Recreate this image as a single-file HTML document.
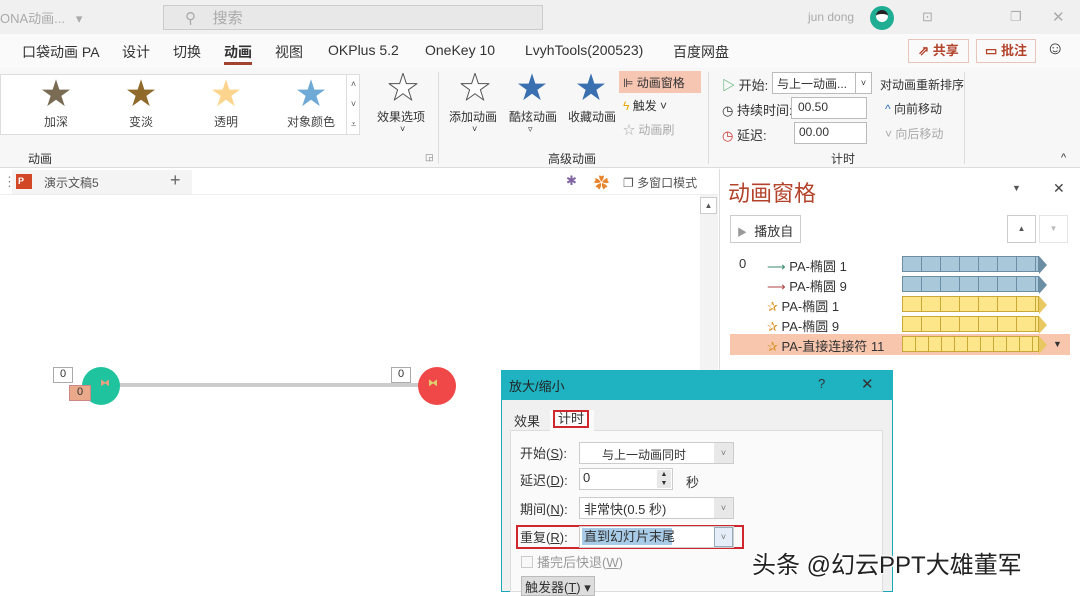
<!DOCTYPE html>
<html><head><meta charset="utf-8"><style>
*{margin:0;padding:0;box-sizing:border-box}
body{width:1080px;height:592px;overflow:hidden;position:relative;background:#fff;font-family:"Liberation Sans","Noto Sans CJK SC",sans-serif;font-size:13px;color:#333}
.a{position:absolute;white-space:nowrap}
.star{position:absolute;font-size:30px;line-height:30px}
.bar{position:absolute;height:16px;border:1px solid #6c8ea4;background:repeating-linear-gradient(90deg,#a9c8d9 0 18px,#6c8ea4 18px 19px)}
.ybar{position:absolute;height:16px;border:1px solid #c9a838;background:repeating-linear-gradient(90deg,#fde68a 0 18px,#c9a838 18px 19px)}
</style></head><body>
<div class="a" style="left:0;top:0;width:1080px;height:34px;background:#f0f0f0"></div>
<div class="a" style="left:0;top:8px;color:#aaa;font-size:13px">ONA动画...&nbsp;&nbsp;&nbsp;▾</div>
<div class="a" style="left:163px;top:5px;width:380px;height:25px;background:#e8e8e8;border:1px solid #ccc"></div>
<div class="a" style="left:185px;top:7px;color:#aaa;font-size:15px">⚲&nbsp;&nbsp;&nbsp;&nbsp;搜索</div>
<div class="a" style="left:808px;top:10px;color:#aaa;font-size:12px">jun dong</div>
<div class="a" style="left:870px;top:6px;width:24px;height:24px;border-radius:50%;background:#1fae93"></div>
<div class="a" style="left:876px;top:10px;width:12px;height:12px;border-radius:50%;background:#fff;border-top:4px solid #222"></div>
<div class="a" style="left:922px;top:9px;color:#aaa;font-size:13px">⊡</div>
<div class="a" style="left:1010px;top:9px;color:#aaa">❐</div>
<div class="a" style="left:1052px;top:8px;color:#aaa;font-size:15px">✕</div>
<div class="a" style="left:0;top:34px;width:1080px;height:34px;background:#fafafa"></div>
<div class="a" style="left:22px;top:42px;font-size:14px;color:#333">口袋动画 PA</div>
<div class="a" style="left:122px;top:42px;font-size:14px">设计</div>
<div class="a" style="left:173px;top:42px;font-size:14px">切换</div>
<div class="a" style="left:224px;top:42px;font-size:14px;font-weight:bold">动画</div>
<div class="a" style="left:224px;top:62px;width:28px;height:3px;background:#a0432f"></div>
<div class="a" style="left:275px;top:42px;font-size:14px">视图</div>
<div class="a" style="left:328px;top:42px;font-size:14px">OKPlus 5.2</div>
<div class="a" style="left:425px;top:42px;font-size:14px">OneKey 10</div>
<div class="a" style="left:525px;top:42px;font-size:14px">LvyhTools(200523)</div>
<div class="a" style="left:673px;top:42px;font-size:14px">百度网盘</div>
<div class="a" style="left:908px;top:39px;width:61px;height:24px;border:1px solid #e8c5bb;color:#b3432b;font-weight:bold;text-align:center;line-height:22px">⇗ 共享</div>
<div class="a" style="left:976px;top:39px;width:60px;height:24px;border:1px solid #e8c5bb;color:#b3432b;font-weight:bold;text-align:center;line-height:22px">▭ 批注</div>
<div class="a" style="left:1046px;top:38px;font-size:18px">☺</div>
<div class="a" style="left:0;top:68px;width:1080px;height:100px;background:#f7f7f7;border-bottom:1px solid #ddd"></div>
<div class="a" style="left:0;top:74px;width:360px;height:61px;background:#fff;border:1px solid #ddd"></div>
<div class="star" style="left:41px;top:80px;color:#7a6b55">★</div>
<div class="star" style="left:126px;top:80px;color:#8f6a2a">★</div>
<div class="star" style="left:211px;top:80px;color:#fbd58e">★</div>
<div class="star" style="left:296px;top:80px;color:#6fa9d6">★</div>
<div class="a" style="left:44px;top:113px;font-size:12px;color:#444">加深</div>
<div class="a" style="left:129px;top:113px;font-size:12px;color:#444">变淡</div>
<div class="a" style="left:214px;top:113px;font-size:12px;color:#444">透明</div>
<div class="a" style="left:287px;top:113px;font-size:12px;color:#444">对象颜色</div>
<div class="a" style="left:346px;top:74px;width:14px;height:61px;border-left:1px solid #ddd;font-size:9px;color:#555;text-align:center;line-height:20px">˄<br>˅<br>⩡</div>
<div class="star" style="left:388px;top:74px;color:#fff;-webkit-text-stroke:1px #555">★</div>
<div class="a" style="left:377px;top:108px;font-size:12px">效果选项</div>
<div class="a" style="left:400px;top:124px;font-size:9px">˅</div>
<div class="a" style="left:28px;top:150px;font-size:12px">动画</div>
<div class="a" style="left:425px;top:152px;font-size:9px;color:#777">◲</div>
<div class="a" style="left:438px;top:72px;width:1px;height:92px;background:#ddd"></div>
<div class="star" style="left:460px;top:74px;color:#fff;-webkit-text-stroke:1px #555">★</div>
<div class="a" style="left:449px;top:108px;font-size:12px">添加动画</div>
<div class="a" style="left:472px;top:124px;font-size:9px">˅</div>
<div class="star" style="left:517px;top:74px;color:#3a6fb0">★</div>
<div class="a" style="left:509px;top:108px;font-size:12px">酷炫动画</div>
<div class="a" style="left:528px;top:124px;font-size:9px">▿</div>
<div class="star" style="left:576px;top:74px;color:#3a6fb0">★</div>
<div class="a" style="left:568px;top:108px;font-size:12px">收藏动画</div>
<div class="a" style="left:619px;top:71px;width:82px;height:22px;background:#f6c6b3"></div>
<div class="a" style="left:623px;top:74px;font-size:12px">⊫ 动画窗格</div>
<div class="a" style="left:623px;top:97px;font-size:12px"><span style="color:#e8a800">ϟ</span> 触发 ˅</div>
<div class="a" style="left:623px;top:121px;font-size:12px;color:#aaa">☆ 动画刷</div>
<div class="a" style="left:548px;top:150px;font-size:12px">高级动画</div>
<div class="a" style="left:708px;top:72px;width:1px;height:92px;background:#ddd"></div>
<div class="a" style="left:722px;top:75px;font-size:13px"><span style="color:#3aa05a">▷</span> 开始:</div>
<div class="a" style="left:772px;top:72px;width:100px;height:22px;background:#fff;border:1px solid #bbb;font-size:12px;padding:2px 4px">与上一动画...<span style="position:absolute;right:0;top:0;width:16px;height:20px;border-left:1px solid #bbb;text-align:center;font-size:9px;line-height:20px">˅</span></div>
<div class="a" style="left:722px;top:100px;font-size:13px">◷ 持续时间:</div>
<div class="a" style="left:791px;top:97px;width:76px;height:22px;background:#fff;border:1px solid #bbb;font-size:12px;padding:2px 6px">00.50</div>
<div class="a" style="left:722px;top:125px;font-size:13px"><span style="color:#c33">◷</span> 延迟:</div>
<div class="a" style="left:794px;top:122px;width:73px;height:22px;background:#fff;border:1px solid #bbb;font-size:12px;padding:2px 4px">00.00</div>
<div class="a" style="left:880px;top:76px;font-size:12px">对动画重新排序</div>
<div class="a" style="left:885px;top:100px;font-size:12px"><span style="color:#2a6db0">^</span> 向前移动</div>
<div class="a" style="left:885px;top:125px;font-size:12px;color:#aaa">˅ 向后移动</div>
<div class="a" style="left:831px;top:150px;font-size:12px">计时</div>
<div class="a" style="left:964px;top:72px;width:1px;height:92px;background:#ddd"></div>
<div class="a" style="left:1061px;top:152px;font-size:11px">^</div>
<div class="a" style="left:0;top:169px;width:718px;height:26px;background:#fff;border-bottom:1px solid #eee"></div>
<div class="a" style="left:12px;top:170px;width:180px;height:24px;background:#f4f4f4"></div>
<div class="a" style="left:3px;top:174px;color:#888">⋮</div>
<div class="a" style="left:16px;top:174px;width:16px;height:15px;background:#d24726;color:#fff;font-size:9px;font-weight:bold;line-height:15px;padding-left:2px">P</div>
<div class="a" style="left:44px;top:174px;font-size:12px;color:#555">演示文稿5</div>
<div class="a" style="left:170px;top:170px;font-size:18px;color:#666">+</div>
<div class="a" style="left:566px;top:173px;color:#8064a2">✱</div>
<div class="a" style="left:594px;top:172px;color:#e8852c;font-size:15px">✿</div>
<div class="a" style="left:623px;top:174px;font-size:12px;color:#555">❐ 多窗口模式</div>
<div class="a" style="left:700px;top:195px;width:18px;height:397px;background:#f3f3f3"></div>
<div class="a" style="left:700px;top:197px;width:17px;height:17px;background:#fff;border:1px solid #ccc;font-size:8px;text-align:center;line-height:15px;color:#555">▲</div>
<div class="a" style="left:100px;top:383px;width:320px;height:4px;background:#ccc"></div>
<div class="a" style="left:82px;top:367px;width:38px;height:38px;border-radius:50%;background:#1fc49e"></div>
<div class="a" style="left:418px;top:367px;width:38px;height:38px;border-radius:50%;background:#f04848"></div>
<div class="a" style="left:100px;top:378px;font-size:10px;color:#e8a080">⧓</div>
<div class="a" style="left:428px;top:378px;font-size:10px;color:#ddd070">⧓</div>
<div class="a" style="left:53px;top:367px;width:20px;height:16px;background:#fff;border:1px solid #aaa;font-size:11px;text-align:center">0</div>
<div class="a" style="left:69px;top:385px;width:22px;height:16px;background:#e9a98a;border:1px solid #c88;font-size:11px;text-align:center">0</div>
<div class="a" style="left:391px;top:367px;width:20px;height:16px;background:#fff;border:1px solid #aaa;font-size:11px;text-align:center">0</div>
<div class="a" style="left:719px;top:169px;width:361px;height:423px;background:#fff;border-left:1px solid #ddd"></div>
<div class="a" style="left:728px;top:176px;font-size:22px;color:#b3432b">动画窗格</div>
<div class="a" style="left:1012px;top:183px;font-size:9px;color:#555">▼</div>
<div class="a" style="left:1053px;top:180px;font-size:14px;color:#444">✕</div>
<div class="a" style="left:730px;top:215px;width:71px;height:28px;border:1px solid #ccc;font-size:13px;padding:5px 6px"><span style="color:#999;font-size:10px">▶</span>&nbsp; 播放自</div>
<div class="a" style="left:1007px;top:215px;width:29px;height:28px;border:1px solid #ccc;font-size:8px;text-align:center;line-height:26px;color:#555">▲</div>
<div class="a" style="left:1039px;top:215px;width:29px;height:28px;border:1px solid #e4e4e4;font-size:8px;text-align:center;line-height:26px;color:#bbb">▼</div>
<div class="a" style="left:730px;top:334px;width:340px;height:21px;background:#f8c6ad"></div>
<div class="a" style="left:739px;top:256px;font-size:13px">0</div>
<div class="a" style="left:767px;top:256px;font-size:13px"><span style="color:#3a8a6a">⟶</span> PA-椭圆 1</div>
<div class="a" style="left:767px;top:276px;font-size:13px"><span style="color:#b04040">⟶</span> PA-椭圆 9</div>
<div class="a" style="left:767px;top:296px;font-size:13px"><span style="color:#d89020">✰</span> PA-椭圆 1</div>
<div class="a" style="left:767px;top:316px;font-size:13px"><span style="color:#d89020">✰</span> PA-椭圆 9</div>
<div class="a" style="left:767px;top:336px;font-size:13px"><span style="color:#d89020">✰</span> PA-直接连接符 11</div>
<div class="bar" style="left:902px;top:256px;width:137px"></div>
<div class="bar" style="left:902px;top:276px;width:137px"></div>
<div class="ybar" style="left:902px;top:296px;width:137px"></div>
<div class="ybar" style="left:902px;top:316px;width:137px"></div>
<div class="ybar" style="left:902px;top:336px;width:137px;background:repeating-linear-gradient(90deg,#fde68a 0 12px,#c9a838 12px 13px)"></div>
<div class="a" style="left:1039px;top:256px;width:0;height:0;border-top:9px solid transparent;border-bottom:9px solid transparent;border-left:8px solid #6c8ea4"></div>
<div class="a" style="left:1039px;top:276px;width:0;height:0;border-top:9px solid transparent;border-bottom:9px solid transparent;border-left:8px solid #6c8ea4"></div>
<div class="a" style="left:1039px;top:296px;width:0;height:0;border-top:9px solid transparent;border-bottom:9px solid transparent;border-left:8px solid #e8c860"></div>
<div class="a" style="left:1039px;top:316px;width:0;height:0;border-top:9px solid transparent;border-bottom:9px solid transparent;border-left:8px solid #e8c860"></div>
<div class="a" style="left:1039px;top:336px;width:0;height:0;border-top:9px solid transparent;border-bottom:9px solid transparent;border-left:8px solid #e8c860"></div>
<div class="a" style="left:1053px;top:339px;font-size:9px">▼</div>
<div class="a" style="left:501px;top:370px;width:392px;height:222px;background:#f0f0f0;border:1px solid #1aa7b5"></div>
<div class="a" style="left:501px;top:370px;width:392px;height:30px;background:#1fb2c1"></div>
<div class="a" style="left:509px;top:376px;font-size:13px;color:#222">放大/缩小</div>
<div class="a" style="left:818px;top:376px;font-size:13px;color:#333">?</div>
<div class="a" style="left:861px;top:375px;font-size:15px;color:#333">✕</div>
<div class="a" style="left:510px;top:430px;width:373px;height:162px;background:#fafafa;border:1px solid #ddd"></div>
<div class="a" style="left:550px;top:410px;width:44px;height:21px;background:#fafafa"></div>
<div class="a" style="left:514px;top:411px;font-size:13px">效果</div>
<div class="a" style="left:553px;top:410px;width:36px;height:18px;border:2px solid #d0272e;font-size:13px;padding-left:3px;line-height:14px">计时</div>
<div class="a" style="left:520px;top:443px;font-size:13px">开始(<u>S</u>):</div>
<div class="a" style="left:579px;top:442px;width:155px;height:22px;background:#fff;border:1px solid #ccc;font-size:12px;padding:3px 0 0 22px">与上一动画同时</div>
<div class="a" style="left:714px;top:443px;width:19px;height:20px;background:#e8e8e8;font-size:9px;text-align:center;line-height:20px;color:#777">˅</div>
<div class="a" style="left:520px;top:470px;font-size:13px">延迟(<u>D</u>):</div>
<div class="a" style="left:579px;top:468px;width:94px;height:22px;background:#fff;border:1px solid #ccc;font-size:13px;padding:1px 3px">0</div>
<div class="a" style="left:657px;top:470px;width:14px;height:18px;background:#e8e8e8;font-size:7px;text-align:center;line-height:9px">▲<br>▼</div>
<div class="a" style="left:686px;top:472px;font-size:13px">秒</div>
<div class="a" style="left:520px;top:499px;font-size:13px">期间(<u>N</u>):</div>
<div class="a" style="left:579px;top:497px;width:155px;height:22px;background:#fff;border:1px solid #ccc;font-size:13px;padding:1px 4px">非常快(0.5 秒)</div>
<div class="a" style="left:714px;top:498px;width:19px;height:20px;background:#e8e8e8;font-size:9px;text-align:center;line-height:20px;color:#777">˅</div>
<div class="a" style="left:516px;top:525px;width:228px;height:24px;border:2px solid #d0272e"></div>
<div class="a" style="left:520px;top:527px;font-size:13px">重复(<u>R</u>):</div>
<div class="a" style="left:579px;top:526px;width:155px;height:22px;background:#fff;border:1px solid #ccc"></div>
<div class="a" style="left:582px;top:528px;width:90px;height:17px;background:#a8cbe8;font-size:13px;line-height:17px;padding-left:2px">直到幻灯片末尾</div>
<div class="a" style="left:714px;top:527px;width:19px;height:20px;background:#e5eef8;border:1px solid #9ab;font-size:9px;text-align:center;line-height:18px;color:#777">˅</div>
<div class="a" style="left:521px;top:556px;width:12px;height:12px;border:1px solid #ccc;background:#f8f8f8"></div>
<div class="a" style="left:537px;top:552px;font-size:13px;color:#999">播完后快退(<u>W</u>)</div>
<div class="a" style="left:521px;top:576px;width:74px;height:20px;background:#ddd;border:1px solid #bbb;font-size:13px;padding-left:3px">触发器(<u>T</u>) ▾</div>
<div class="a" style="left:752px;top:545px;font-size:24px;color:#222;text-shadow:-1px -1px 0 #fff,1px 1px 0 #fff,1px -1px 0 #fff,-1px 1px 0 #fff,0 0 3px #fff">头条 @幻云PPT大雄董军</div>
</body></html>
